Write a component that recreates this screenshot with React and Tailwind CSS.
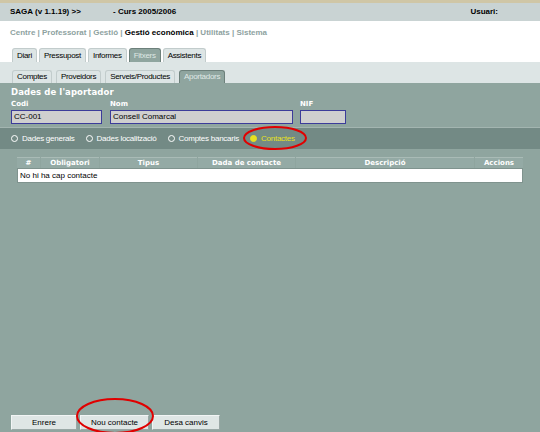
import React from "react";

const font = { fontFamily: '"Liberation Sans", Arial, sans-serif' };
const wide = { fontFamily: '"DejaVu Sans", Verdana, sans-serif' };

function Tab({ label, active, h = "h-[14px]" }) {
  return (
    <div
      className={
        h +
        " px-[4px] flex items-center text-[8px] tracking-[-0.3px] rounded-t-[3px] border border-b-0 " +
        (active
          ? "bg-[#8fa59f] border-[#6d807b] text-[#dfe8e5]"
          : "bg-[#dde5e5] border-[#c2cccc] text-black")
      }
    >
      {label}
    </div>
  );
}

function Radio({ label, checked }) {
  return (
    <div className="flex items-center gap-[4px]">
      <span
        className={
          "w-[7px] h-[7px] rounded-full border " +
          (checked ? "bg-[#e8e020] border-[#e8e020]" : "border-white")
        }
      />
      <span className={"text-[8px] tracking-[-0.25px] " + (checked ? "text-[#e8e020]" : "text-white")}>{label}</span>
    </div>
  );
}

function Btn({ label }) {
  return (
    <div className="h-[15px] flex items-center justify-center text-[8px] bg-[#dfe6e5] border border-[#f2f5f5] border-r-[#9aa8a6] border-b-[#9aa8a6] text-black">
      {label}
    </div>
  );
}

export default function App() {
  return (
    <div className="relative w-[540px] h-[432px] flex flex-col bg-[#8fa59f] overflow-hidden" style={font}>
      <div className="h-[3px] bg-[#cfc6a6]" />
      <div className="h-[18px] bg-[#c9d3d3] flex items-center px-[10px] text-[8px] font-bold text-black">
        <span className="w-[103px]">SAGA (v 1.1.19) &gt;&gt;</span>
        <span>- Curs 2005/2006</span>
        <span className="ml-auto mr-[32px]">Usuari:</span>
      </div>
      <div className="bg-white h-[41px] flex flex-col px-[12px]">
        <div className="text-[8px] pt-[6px] text-[#8ea29f] font-bold ml-[-2px]">
          Centre | Professorat | Gestió | <span className="text-black">Gestió econòmica</span> | Utilitats | Sistema
        </div>
        <div className="mt-auto flex gap-[2px]">
          <Tab label="Diari" />
          <Tab label="Pressupost" />
          <Tab label="Informes" />
          <Tab label="Fitxers" active />
          <Tab label="Assistents" />
        </div>
      </div>
      <div className="bg-[#dde5e5] h-[21px] flex items-end px-[12px] gap-[4px]">
        <Tab label="Comptes" h="h-[13px]" />
        <Tab label="Proveidors" h="h-[13px]" />
        <Tab label="Serveis/Productes" h="h-[13px]" />
        <Tab label="Aportadors" active h="h-[13px]" />
      </div>
      <div className="px-[11px] pt-[4px] h-[44px]">
        <div className="text-[8.5px] leading-[11px] font-bold text-white tracking-[0.1px]" style={wide}>
          Dades de l'aportador
        </div>
        <div className="flex gap-[8px] mt-[2px] text-[7px] font-bold text-white" style={wide}>
          <div className="flex flex-col w-[91px]">
            <span className="leading-[9px] mb-[1px]">Codi</span>
            <div className="h-[14px] bg-[#cfcfcf] border border-[#3c3c9a] text-black font-normal text-[8px] px-[2px] flex items-center" style={font}>CC-001</div>
          </div>
          <div className="flex flex-col w-[183px]">
            <span className="leading-[9px] mb-[1px]">Nom</span>
            <div className="h-[14px] bg-[#cfcfcf] border border-[#3c3c9a] text-black font-normal text-[8px] px-[2px] flex items-center" style={font}>Consell Comarcal</div>
          </div>
          <div className="flex flex-col w-[46px] ml-[-1px]">
            <span className="leading-[9px] mb-[1px]">NIF</span>
            <div className="h-[14px] bg-[#cfcfcf] border border-[#3c3c9a]" />
          </div>
        </div>
      </div>
      <div className="h-[22px] bg-[#738a85] border-t border-[#a3b5b0] flex items-center gap-[11px] px-[11px]">
        <Radio label="Dades generals" />
        <Radio label="Dades localització" />
        <Radio label="Comptes bancaris" />
        <Radio label="Contactes" checked />
      </div>
      <div className="bg-[#8fa59f] flex-1 flex flex-col">
        <div className="mx-[17px] mt-[8px] w-[506px]">
          <div className="grid grid-cols-[23px_58px_97px_97px_178px_1fr] gap-[1px] h-[11px] text-[7px] font-bold text-white" style={wide}>
            {["#", "Obligatori", "Tipus", "Dada de contacte", "Descripció", "Accions"].map((h) => (
              <div key={h} className="bg-[#94aaa5] border-t border-[#a9bbb6] flex items-center justify-center leading-none">
                {h}
              </div>
            ))}
          </div>
          <div className="h-[15px] bg-white border border-[#7f938e] text-[8px] text-black flex items-center px-[2px]">
            No hi ha cap contacte
          </div>
        </div>
        <div className="mt-auto mb-[2px] ml-[11px] flex gap-[3px]">
          <div className="w-[66px]"><Btn label="Enrere" /></div>
          <div className="w-[69px]"><Btn label="Nou contacte" /></div>
          <div className="w-[68px]"><Btn label="Desa canvis" /></div>
        </div>
      </div>
      <svg className="absolute left-0 top-0 pointer-events-none" width="540" height="432">
        <ellipse cx="275" cy="138" rx="31" ry="11" fill="none" stroke="#e00000" strokeWidth="2" />
        <ellipse cx="115" cy="416" rx="38" ry="17" fill="none" stroke="#e00000" strokeWidth="2" />
      </svg>
    </div>
  );
}
